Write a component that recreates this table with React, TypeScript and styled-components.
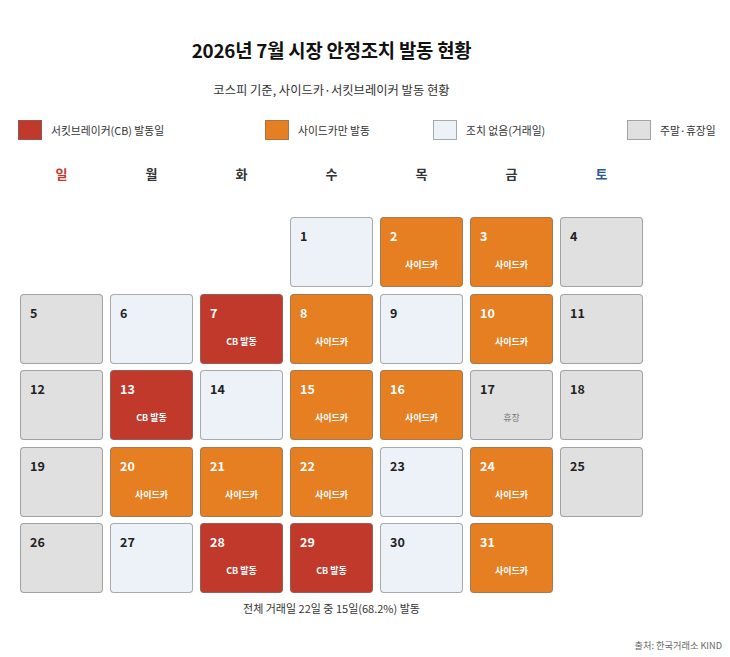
import React from "react";
import styled, { createGlobalStyle, css } from "styled-components";

type Kind = "cb" | "side" | "none" | "off" | "holiday";

const GlobalStyle = createGlobalStyle`
  html, body { margin: 0; padding: 0; background: #ffffff; }
  body { font-family: "Noto Sans CJK KR", "Noto Sans", sans-serif; color: #222; }
`;

const COLORS: Record<Kind, string> = {
  cb: "#c0392b",
  side: "#e67e22",
  none: "#edf2f9",
  off: "#e0e0e0",
  holiday: "#e0e0e0",
};

const Page = styled.div`
  width: 730px;
  height: 657px;
  display: flex;
  flex-direction: column;
  overflow: hidden;
`;

const Main = styled.div`
  width: 663px;
  padding: 0 20px;
  box-sizing: border-box;
  display: flex;
  flex-direction: column;
  align-items: center;
`;

const Title = styled.h1`
  margin: 38px 0 0;
  font-size: 18.8px;
  line-height: 24px;
  font-weight: 700;
  color: #111;
  letter-spacing: -0.2px;
`;

const Subtitle = styled.div`
  margin-top: 18px;
  font-size: 12.3px;
  line-height: 20px;
  color: #333;
`;

const Legend = styled.div`
  margin-top: 20px;
  padding-left: 18px;
  display: grid;
  grid-template-columns: 247px 168px 194px auto;
  align-items: center;
  height: 20px;
`;

const LegendItem = styled.div`
  display: flex;
  align-items: center;
  gap: 9px;
  font-size: 10.8px;
  color: #333;
`;

const Swatch = styled.span<{ $kind: Kind }>`
  width: 22px;
  height: 18px;
  background: ${(p) => COLORS[p.$kind]};
  border: 1px solid rgba(110, 110, 110, 0.55);
`;

const Weekdays = styled.div`
  margin-top: 24px;
  display: grid;
  grid-template-columns: repeat(7, 83px);
  column-gap: 7px;
  width: 623px;
`;

const Weekday = styled.div<{ $tone: "sun" | "sat" | "plain" }>`
  text-align: center;
  font-size: 13px;
  line-height: 20px;
  font-weight: 700;
  color: ${(p) => (p.$tone === "sun" ? "#c0392b" : p.$tone === "sat" ? "#2c5a8f" : "#333")};
`;

const Grid = styled.div`
  margin-top: 33px;
  display: grid;
  grid-template-columns: repeat(7, 83px);
  grid-auto-rows: 70px;
  column-gap: 7px;
  row-gap: 6.5px;
  width: 623px;
`;

const Blank = styled.div``;

const Cell = styled.div<{ $kind: Kind }>`
  box-sizing: border-box;
  background: ${(p) => COLORS[p.$kind]};
  border: 1px solid rgba(120, 120, 120, 0.6);
  border-radius: 4px;
  padding: 10px 9px 0;
  display: flex;
  flex-direction: column;
  ${(p) =>
    p.$kind === "cb" || p.$kind === "side"
      ? css`color: #ffffff;`
      : css`color: #222;`}
`;

const DayNum = styled.div`
  font-size: 12.5px;
  line-height: 16px;
  font-weight: 700;
`;

const Tag = styled.div<{ $muted?: boolean }>`
  margin-top: 15px;
  text-align: center;
  font-size: 9px;
  line-height: 12px;
  font-weight: ${(p) => (p.$muted ? 400 : 700)};
  color: ${(p) => (p.$muted ? "#777" : "inherit")};
`;

const Summary = styled.div`
  margin-top: 6px;
  font-size: 11px;
  line-height: 18px;
  color: #333;
`;

const Source = styled.div`
  margin-top: 20px;
  padding-right: 8px;
  text-align: right;
  font-size: 9.2px;
  line-height: 16px;
  color: #666;
`;

const days: Kind[] = [
  "none", "side", "side", "off",
  "off", "none", "cb", "side", "none", "side", "off",
  "off", "cb", "none", "side", "side", "holiday", "off",
  "off", "side", "side", "side", "none", "side", "off",
  "off", "none", "cb", "cb", "none", "side",
];

const TAGS: Partial<Record<Kind, string>> = {
  cb: "CB 발동",
  side: "사이드카",
  holiday: "휴장",
};

const weekdays: { label: string; tone: "sun" | "sat" | "plain" }[] = [
  { label: "일", tone: "sun" },
  { label: "월", tone: "plain" },
  { label: "화", tone: "plain" },
  { label: "수", tone: "plain" },
  { label: "목", tone: "plain" },
  { label: "금", tone: "plain" },
  { label: "토", tone: "sat" },
];

const legend: { kind: Kind; label: string }[] = [
  { kind: "cb", label: "서킷브레이커(CB) 발동일" },
  { kind: "side", label: "사이드카만 발동" },
  { kind: "none", label: "조치 없음(거래일)" },
  { kind: "off", label: "주말·휴장일" },
];

export default function App() {
  const offset = 3;
  return (
    <Page>
      <GlobalStyle />
      <Main>
        <Title>2026년 7월 시장 안정조치 발동 현황</Title>
        <Subtitle>코스피 기준, 사이드카·서킷브레이커 발동 현황</Subtitle>
      </Main>
      <Legend>
        {legend.map((l) => (
          <LegendItem key={l.label}>
            <Swatch $kind={l.kind} />
            {l.label}
          </LegendItem>
        ))}
      </Legend>
      <Main>
        <Weekdays>
          {weekdays.map((w) => (
            <Weekday key={w.label} $tone={w.tone}>
              {w.label}
            </Weekday>
          ))}
        </Weekdays>
        <Grid>
          {Array.from({ length: offset }).map((_, i) => (
            <Blank key={`b${i}`} />
          ))}
          {days.map((k, i) => (
            <Cell key={i} $kind={k}>
              <DayNum>{i + 1}</DayNum>
              {TAGS[k] && <Tag $muted={k === "holiday"}>{TAGS[k]}</Tag>}
            </Cell>
          ))}
        </Grid>
        <Summary>전체 거래일 22일 중 15일(68.2%) 발동</Summary>
      </Main>
      <Source>출처: 한국거래소 KIND</Source>
    </Page>
  );
}
